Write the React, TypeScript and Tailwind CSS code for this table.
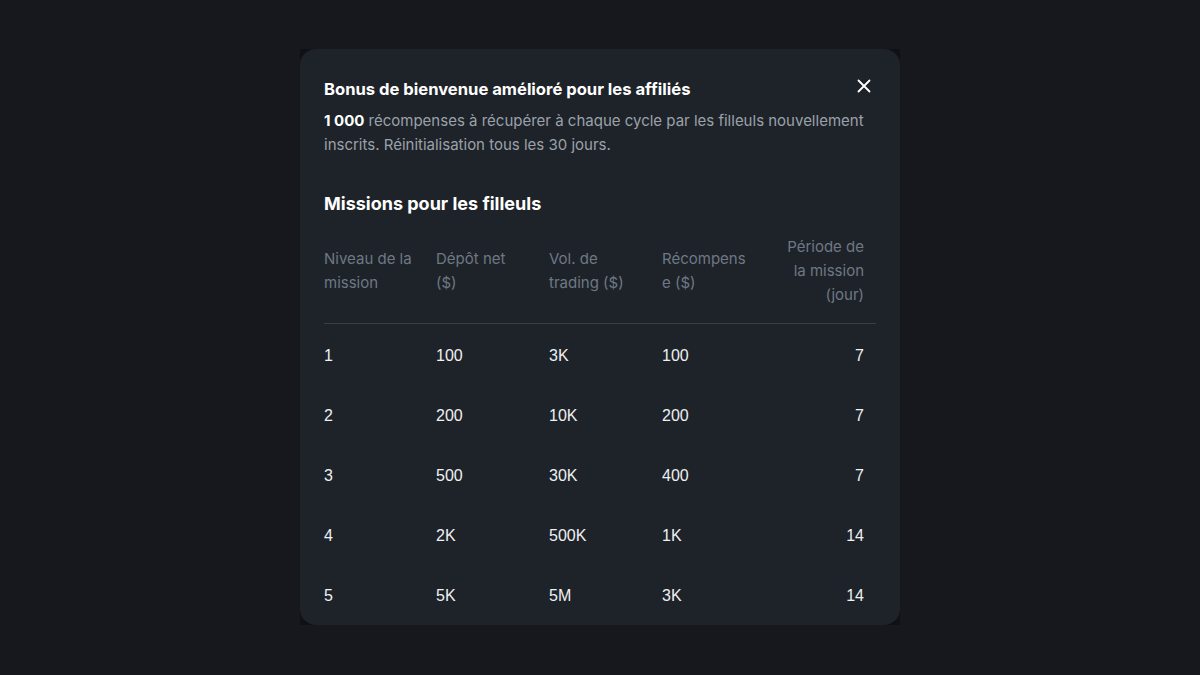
import { X } from "lucide-react";

const rows = [
    { level: "1", deposit: "100", volume: "3K", reward: "100", days: "7" },
    { level: "2", deposit: "200", volume: "10K", reward: "200", days: "7" },
    { level: "3", deposit: "500", volume: "30K", reward: "400", days: "7" },
    { level: "4", deposit: "2K", volume: "500K", reward: "1K", days: "14" },
    { level: "5", deposit: "5K", volume: "5M", reward: "3K", days: "14" },
];

const cols = "grid grid-cols-[112px_113px_113px_113px_101px]";

export default function App() {
    return (
        <div className="h-[675px] w-full bg-[#17181e] flex items-start justify-center pt-[49px] font-['Inter',sans-serif]">
            <div className="w-[600px] h-[576px] bg-[#101115]">
                <div className="h-full rounded-2xl bg-[#1e2329] overflow-hidden px-6 pt-[28px]">
                    <div className="flex items-start justify-between">
                        <h2 className="text-[16.6px] leading-6 font-bold text-white">
                            Bonus de bienvenue amélioré pour les affiliés
                        </h2>
                        <button className="mr-[1px] -mt-[2px] text-white">
                            <X size={22} strokeWidth={2} />
                        </button>
                    </div>
                    <p className="mt-2 text-[15px] leading-6 text-[#9ba1a9] pr-2">
                        <span className="font-bold text-white">1&nbsp;000</span> récompenses à récupérer à chaque cycle par les filleuls nouvellement inscrits. Réinitialisation tous les 30 jours.
                    </p>
                    <h3 className="mt-[33px] text-[18px] leading-7 font-bold text-white">
                        Missions pour les filleuls
                    </h3>
                    <div className={`${cols} mt-[17px] pb-4 border-b border-[#3a3f46] items-center text-[15px] leading-6 text-[#6e7884]`}>
                        <div className="pr-3">Niveau de la<br />mission</div>
                        <div className="pr-3">Dépôt net<br />($)</div>
                        <div className="pr-3">Vol. de<br />trading ($)</div>
                        <div className="pr-3">Récompens<br />e ($)</div>
                        <div className="pr-3 text-right">Période de<br />la mission<br />(jour)</div>
                    </div>
                    {rows.map((row) => (
                        <div key={row.level} className={`${cols} h-[60px] pt-[4px] items-center text-[16px] text-[#eef0f2] font-['Liberation_Sans',sans-serif]`}>
                            <div>{row.level}</div>
                            <div>{row.deposit}</div>
                            <div>{row.volume}</div>
                            <div>{row.reward}</div>
                            <div className="pr-3 text-right">{row.days}</div>
                        </div>
                    ))}
                </div>
            </div>
        </div>
    );
}
